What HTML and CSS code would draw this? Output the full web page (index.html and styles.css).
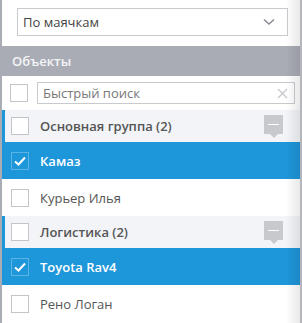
FILE: index.html
```html
<!DOCTYPE html>
<html lang="ru">
<head>
  <meta charset="UTF-8">
  <title>Объекты</title>
  <link rel="stylesheet" href="styles.css">
</head>
<body>
  <div class="panel">
    <div class="filter">
      <div class="select">
        <span>По маячкам</span>
        <svg class="chevron" width="12" height="8" viewBox="0 0 12 8"><path d="M1 1.5 L6 6 L11 1.5" fill="none" stroke="#8a8d94" stroke-width="1.6"/></svg>
      </div>
    </div>

    <div class="section-title">Объекты</div>

    <div class="search-row">
      <span class="check"></span>
      <div class="search">
        <span>Быстрый поиск</span>
        <svg width="11" height="11" viewBox="0 0 11 11"><path d="M1 1 L10 10 M10 1 L1 10" stroke="#c4c6cb" stroke-width="1.2"/></svg>
      </div>
    </div>

    <div class="group">
      <span class="check"></span>
      <span class="group-name">Основная группа (2)</span>
      <span class="collapse"></span>
    </div>
    <div class="item selected">
      <span class="check"><svg width="14" height="12" viewBox="0 0 14 12"><path d="M2 6.5 L5.5 9.5 L12 2.5" fill="none" stroke="#fff" stroke-width="2"/></svg></span>
      <span>Камаз</span>
    </div>
    <div class="item">
      <span class="check"></span>
      <span>Курьер Илья</span>
    </div>

    <div class="group">
      <span class="check"></span>
      <span class="group-name">Логистика (2)</span>
      <span class="collapse"></span>
    </div>
    <div class="item selected">
      <span class="check"><svg width="14" height="12" viewBox="0 0 14 12"><path d="M2 6.5 L5.5 9.5 L12 2.5" fill="none" stroke="#fff" stroke-width="2"/></svg></span>
      <span>Toyota Rav4</span>
    </div>
    <div class="item">
      <span class="check"></span>
      <span>Рено Логан</span>
    </div>
  </div>
</body>
</html>
```

FILE: styles.css
```css
body {
  margin: 0;
  font-family: 'Open Sans', sans-serif;
  font-size: 13px;
  color: #555;
  background: #fff;
}
.panel {
  position: relative;
  width: 298px;
  height: 323px;
  overflow: hidden;
  border-left: 2px solid #a9acb5;
  border-right: 2px solid #b4b6bc;
}
.panel::after {
  content: "";
  position: absolute;
  top: 0;
  right: 0;
  width: 14px;
  height: 100%;
  background: linear-gradient(to right, rgba(0,0,0,0), rgba(0,0,0,0.09));
  pointer-events: none;
}
.filter {
  padding: 8px 12px 10px 15px;
}
.select {
  display: flex;
  align-items: center;
  justify-content: space-between;
  height: 26px;
  border: 1px solid #c8cad0;
  padding: 0 12px 0 5px;
  color: #444;
}
.section-title {
  height: 30px;
  line-height: 30px;
  padding-left: 10px;
  background: #a9acb5;
  color: #f4f5f7;
  font-weight: 600;
}
.search-row {
  display: flex;
  align-items: center;
  gap: 9px;
  height: 34px;
  padding-left: 8px;
}
.search {
  flex: 1;
  display: flex;
  align-items: center;
  justify-content: space-between;
  height: 20px;
  margin-right: 5px;
  border: 1px solid #c8cad0;
  padding: 0 6px 0 5px;
  color: #777;
}
.check {
  display: inline-flex;
  align-items: center;
  justify-content: center;
  box-sizing: border-box;
  width: 18px;
  height: 18px;
  border: 1px solid #c3c5ca;
  background: #fff;
  flex-shrink: 0;
}
.group {
  position: relative;
  display: flex;
  align-items: center;
  gap: 11px;
  height: 32px;
  padding-left: 6px;
  border-left: 3px solid #1e96da;
  background: #f2f4f7;
  font-weight: 600;
  color: #555;
}
.collapse {
  position: absolute;
  left: 259px;
  top: 5px;
  width: 19px;
  height: 19px;
  background: #c8c9cc;
}
.collapse::before {
  content: "";
  position: absolute;
  left: 4px;
  top: 9px;
  width: 11px;
  height: 1px;
  background: #fff;
}
.collapse::after {
  content: "";
  position: absolute;
  left: 6px;
  top: 19px;
  border-left: 4px solid transparent;
  border-right: 4px solid transparent;
  border-top: 4px solid #c8c9cc;
}
.item {
  display: flex;
  align-items: center;
  gap: 11px;
  height: 37px;
  padding-left: 9px;
}
.item.selected {
  background: #1e96da;
  color: #fff;
  font-weight: 600;
}
.item.selected .check {
  background: transparent;
  border-color: #5cb3e6;
}
```
